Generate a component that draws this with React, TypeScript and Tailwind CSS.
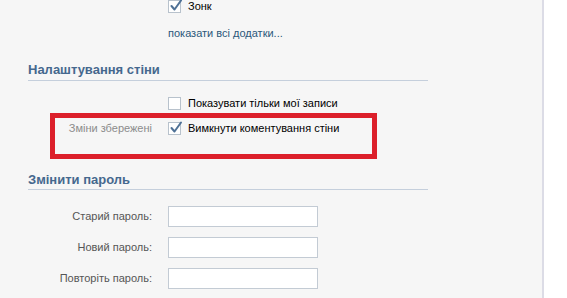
import React from "react";

const font = { fontFamily: '"Liberation Sans", Arial, sans-serif' };

function Box({ checked }: { checked?: boolean }) {
  return (
    <div className="relative w-[13px] h-[13px] shrink-0 border border-[#b8c2cc] bg-white">
      {checked && (
        <svg className="absolute left-[1px] top-[-2px]" width="13" height="13" viewBox="0 0 13 13">
          <path d="M1.5 7 L4.5 10.5 L11 1.5" fill="none" stroke="#4f7196" strokeWidth="2" strokeLinecap="round" strokeLinejoin="round" />
        </svg>
      )}
    </div>
  );
}

function Heading({ text, cls }: { text: string; cls: string }) {
  return (
    <div className={`ml-[28px] w-[400px] border-b border-[#c5cfdc] ${cls}`}>
      <div className="text-[13px] leading-[16px] font-bold text-[#45688e]">{text}</div>
    </div>
  );
}

function Field({ label, cls, h }: { label: string; cls: string; h: string }) {
  return (
    <div className={`flex items-center ${cls}`}>
      <div className="w-[152px] text-right text-[11px] text-[#555]">{label}</div>
      <div className={`ml-[16px] w-[150px] ${h} border border-[#c3cbd4] bg-white`} />
    </div>
  );
}

export default function App() {
  return (
    <div className="w-[567px] h-[298px] bg-white flex overflow-hidden" style={font}>
      <div className="relative w-[544px] h-[298px] border-r-2 border-[#dcdce6] bg-[#f6f6f6] flex flex-col">
        <div className="flex items-center h-[13px]">
          <div className="w-[168px]" />
          <Box checked />
          <span className="ml-[7px] text-[11px] text-black">Зонк</span>
        </div>
        <div className="mt-[13px] h-[14px] flex items-center">
          <span className="ml-[168px] text-[11px] text-[#2b587a]">показати всі додатки...</span>
        </div>
        <Heading text="Налаштування стіни" cls="mt-[22px] pb-[2px]" />
        <div className="mt-[16px] flex items-center h-[13px]">
          <div className="w-[168px]" />
          <Box />
          <span className="ml-[7px] text-[11px] text-black">Показувати тільки мої записи</span>
        </div>
        <div className="mt-[12px] flex items-center h-[13px]">
          <div className="w-[152px] text-right text-[11px] text-[#8c8c8c]">Зміни збережені</div>
          <div className="ml-[16px]">
            <Box checked />
          </div>
          <span className="ml-[7px] text-[11px] text-black">Вимкнути коментування стіни</span>
        </div>
        <Heading text="Змінити пароль" cls="mt-[37px] pb-[1px]" />
        <Field label="Старий пароль:" cls="mt-[16px]" h="h-[21px]" />
        <Field label="Новий пароль:" cls="mt-[10px]" h="h-[21px]" />
        <Field label="Повторіть пароль:" cls="mt-[10px]" h="h-[21px]" />
        <div className="absolute left-[50px] top-[113px] w-[327px] h-[46px] border-[5px] border-[#dc1f2a]" />
      </div>
    </div>
  );
}
